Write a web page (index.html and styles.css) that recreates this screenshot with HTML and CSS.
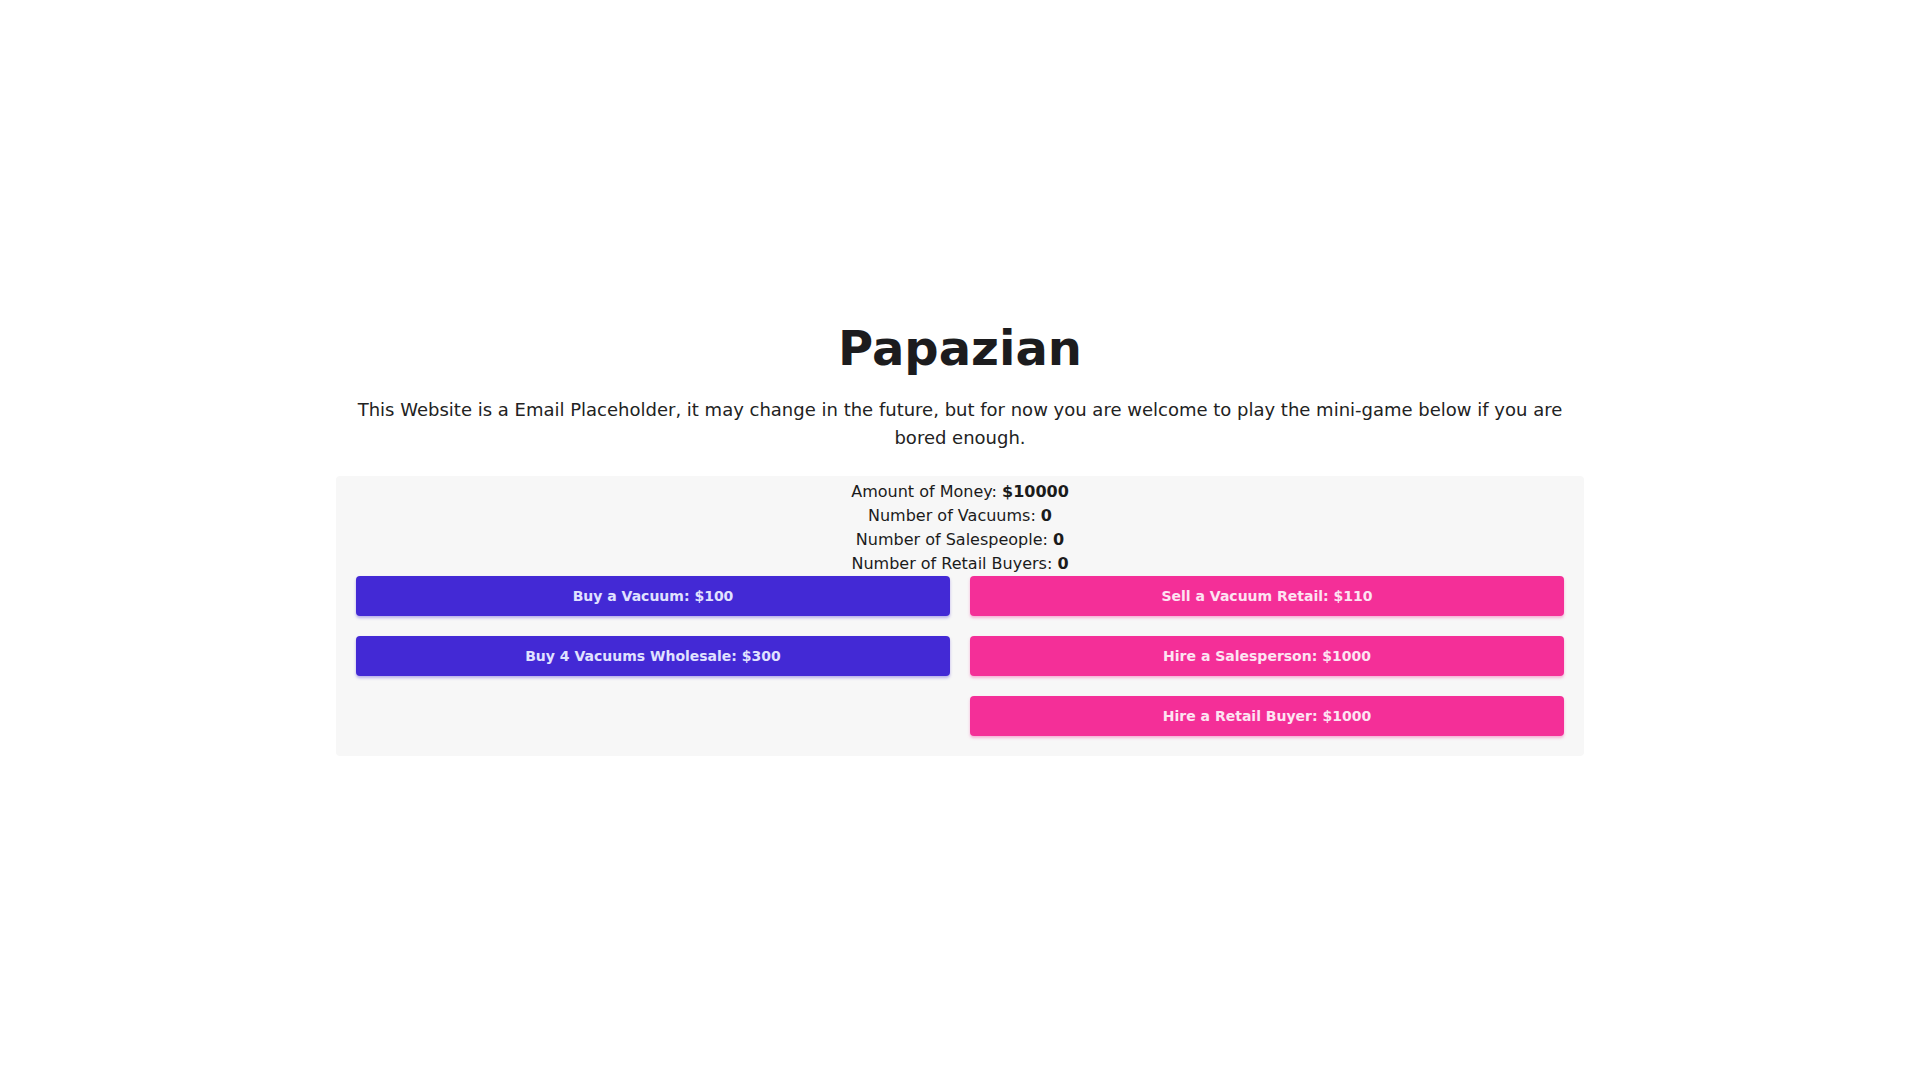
FILE: index.html
```html
<!DOCTYPE html>
<html lang="en">
<head>
    <meta charset="UTF-8">
    <meta name="viewport" content="width=device-width, initial-scale=1.0">
    <title>Papazian</title>
    <link rel="stylesheet" href="styles.css">
</head>
<body>
    <main class="page">
        <div class="content">
            <h1>Papazian</h1>
            <p class="intro">This Website is a Email Placeholder, it may change in the future, but for now you are welcome to play the mini-game below if you are bored enough.</p>

            <!-- Vacuum mini-game -->
            <div class="game">
                <div class="stats">
                    <div>Amount of Money: <b id="money">$10000</b></div>
                    <div>Number of Vacuums: <b id="vacuums">0</b></div>
                    <div>Number of Salespeople: <b id="salespeople">0</b></div>
                    <div>Number of Retail Buyers: <b id="buyers">0</b></div>
                </div>
                <div class="actions">
                    <div class="column">
                        <button class="btn buy">Buy a Vacuum: $100</button>
                        <button class="btn buy">Buy 4 Vacuums Wholesale: $300</button>
                    </div>
                    <div class="column">
                        <button class="btn sell">Sell a Vacuum Retail: $110</button>
                        <button class="btn sell">Hire a Salesperson: $1000</button>
                        <button class="btn sell">Hire a Retail Buyer: $1000</button>
                    </div>
                </div>
            </div>
        </div>
    </main>
</body>
</html>
```

FILE: styles.css
```css
* {
    margin: 0;
    padding: 0;
    box-sizing: border-box;
}

body {
    font-family: 'DejaVu Sans', sans-serif;
    background: #ffffff;
    color: #1b1b1b;
}

.page {
    min-height: 100vh;
    display: flex;
    justify-content: center;
    align-items: center;
}

.content {
    width: 1248px;
    text-align: center;
}

h1 {
    font-size: 48px;
    line-height: 48px;
    font-weight: 700;
    color: #1c1c1e;
    margin-bottom: 24px;
}

.intro {
    font-size: 18px;
    line-height: 28px;
    color: #222;
    margin-bottom: 24px;
    padding: 0 20px;
}

/* Game panel */
.game {
    background: #f7f7f7;
    border-radius: 4px;
    padding: 4px 20px 20px;
}

.stats {
    font-size: 16px;
    line-height: 24px;
    color: #1b1b1b;
}

.stats b {
    font-weight: 700;
}

.actions {
    display: grid;
    grid-template-columns: 1fr 1fr;
    gap: 20px;
}

.column {
    display: flex;
    flex-direction: column;
    gap: 20px;
}

.btn {
    height: 40px;
    border: none;
    border-radius: 4px;
    font-family: 'DejaVu Sans', sans-serif;
    font-size: 14px;
    font-weight: 700;
    cursor: pointer;
}

.btn.buy {
    background: #4329d5;
    color: #e0e2ff;
    box-shadow: 0 2px 3px rgba(67, 41, 213, 0.35);
}

.btn.sell {
    background: #f42f98;
    color: #fde4f2;
    box-shadow: 0 2px 3px rgba(244, 47, 152, 0.35);
}
```
